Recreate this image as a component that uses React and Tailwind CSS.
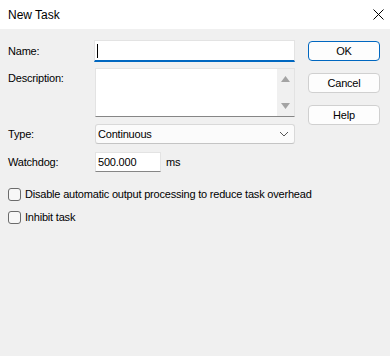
import React from "react";

// --- DIALOG BITS ---
const font = { fontFamily: '"Segoe UI", "Liberation Sans", Arial, sans-serif' };
const txt = "text-[11px] tracking-[-0.2px] text-black";

function Btn({ children, primary }) {
  return (
    <button
      className={`h-[20px] w-[72px] rounded-[4px] bg-[#fdfdfd] leading-none ${txt} ${
        primary ? "border border-[#0067c0]" : "border border-[#d0d0d0]"
      }`}
    >
      {children}
    </button>
  );
}

function Check({ label }) {
  return (
    <label className="flex items-center h-[14px]">
      <span className="w-[13px] h-[13px] rounded-[3px] border border-[#6b6b6b] bg-[#f7f7f7] shrink-0" />
      <span className={`ml-[4px] ${txt}`}>{label}</span>
    </label>
  );
}

export default function App() {
  return (
    <div className="w-[390px] h-[356px] bg-[#f0f0f0] flex flex-col" style={font}>
      {/* title bar */}
      <div className="h-[29px] bg-white flex items-center justify-between pl-[8px] pr-[5px] shrink-0">
        <span className="text-[12px] text-black">New Task</span>
        <svg width="11" height="11" viewBox="0 0 11 11" className="mr-[1px]">
          <path d="M0.5 0.5 L10.5 10.5 M10.5 0.5 L0.5 10.5" stroke="#000" strokeWidth="1" />
        </svg>
      </div>

      <div className="flex pl-[8px] pt-[11px]">
        {/* fields */}
        <div className="w-[287px] flex flex-col">
          <div className="flex items-center h-[22px]">
            <span className={`w-[86px] ${txt}`}>Name:</span>
            <div className="w-[201px] h-[22px] bg-white border border-[#e3e3e3] border-b-2 border-b-[#0067c0] flex items-center pl-[2px]">
              <span className="w-[1px] h-[14px] bg-black" />
            </div>
          </div>

          <div className="flex mt-[6px] h-[49px]">
            <span className={`w-[87px] pt-[2px] ${txt}`}>Description:</span>
            <div className="w-[200px] h-[49px] bg-white border border-[#e3e3e3] border-b-[#868686] flex justify-end">
              <div className="w-[17px] h-full bg-[#f0f0f0] flex flex-col items-center justify-between py-[7px]">
                <svg width="9" height="6" viewBox="0 0 9 6"><path d="M4.5 0 L9 6 L0 6 Z" fill="#a3a3a3" /></svg>
                <svg width="9" height="6" viewBox="0 0 9 6"><path d="M0 0 L9 0 L4.5 6 Z" fill="#a3a3a3" /></svg>
              </div>
            </div>
          </div>

          <div className="flex items-center mt-[7px] h-[20px]">
            <span className={`w-[87px] ${txt}`}>Type:</span>
            <div className="w-[200px] h-[20px] bg-[#fbfbfb] border border-[#d9d9d9] border-b-[#c4c4c4] rounded-[3px] flex items-center justify-between pl-[2px] pr-[5px]">
              <span className={txt}>Continuous</span>
              <svg width="10" height="6" viewBox="0 0 10 6"><path d="M1 1 L5 5 L9 1" stroke="#555" fill="none" strokeWidth="1" /></svg>
            </div>
          </div>

          <div className="flex items-center mt-[8px] h-[20px]">
            <span className={`w-[87px] ${txt}`}>Watchdog:</span>
            <div className="w-[66px] h-[20px] bg-white border border-[#e3e3e3] border-b-[#868686] flex items-center pl-[2px]">
              <span className={txt}>500.000</span>
            </div>
            <span className={`ml-[5px] ${txt}`}>ms</span>
          </div>
        </div>

        {/* buttons */}
        <div className="ml-[13px] flex flex-col gap-[12px] pt-[1px]">
          <Btn primary>OK</Btn>
          <Btn>Cancel</Btn>
          <Btn>Help</Btn>
        </div>
      </div>

      <div className="flex flex-col pl-[8px] mt-[15px] gap-[9px]">
        <Check label="Disable automatic output processing to reduce task overhead" />
        <Check label="Inhibit task" />
      </div>
    </div>
  );
}
